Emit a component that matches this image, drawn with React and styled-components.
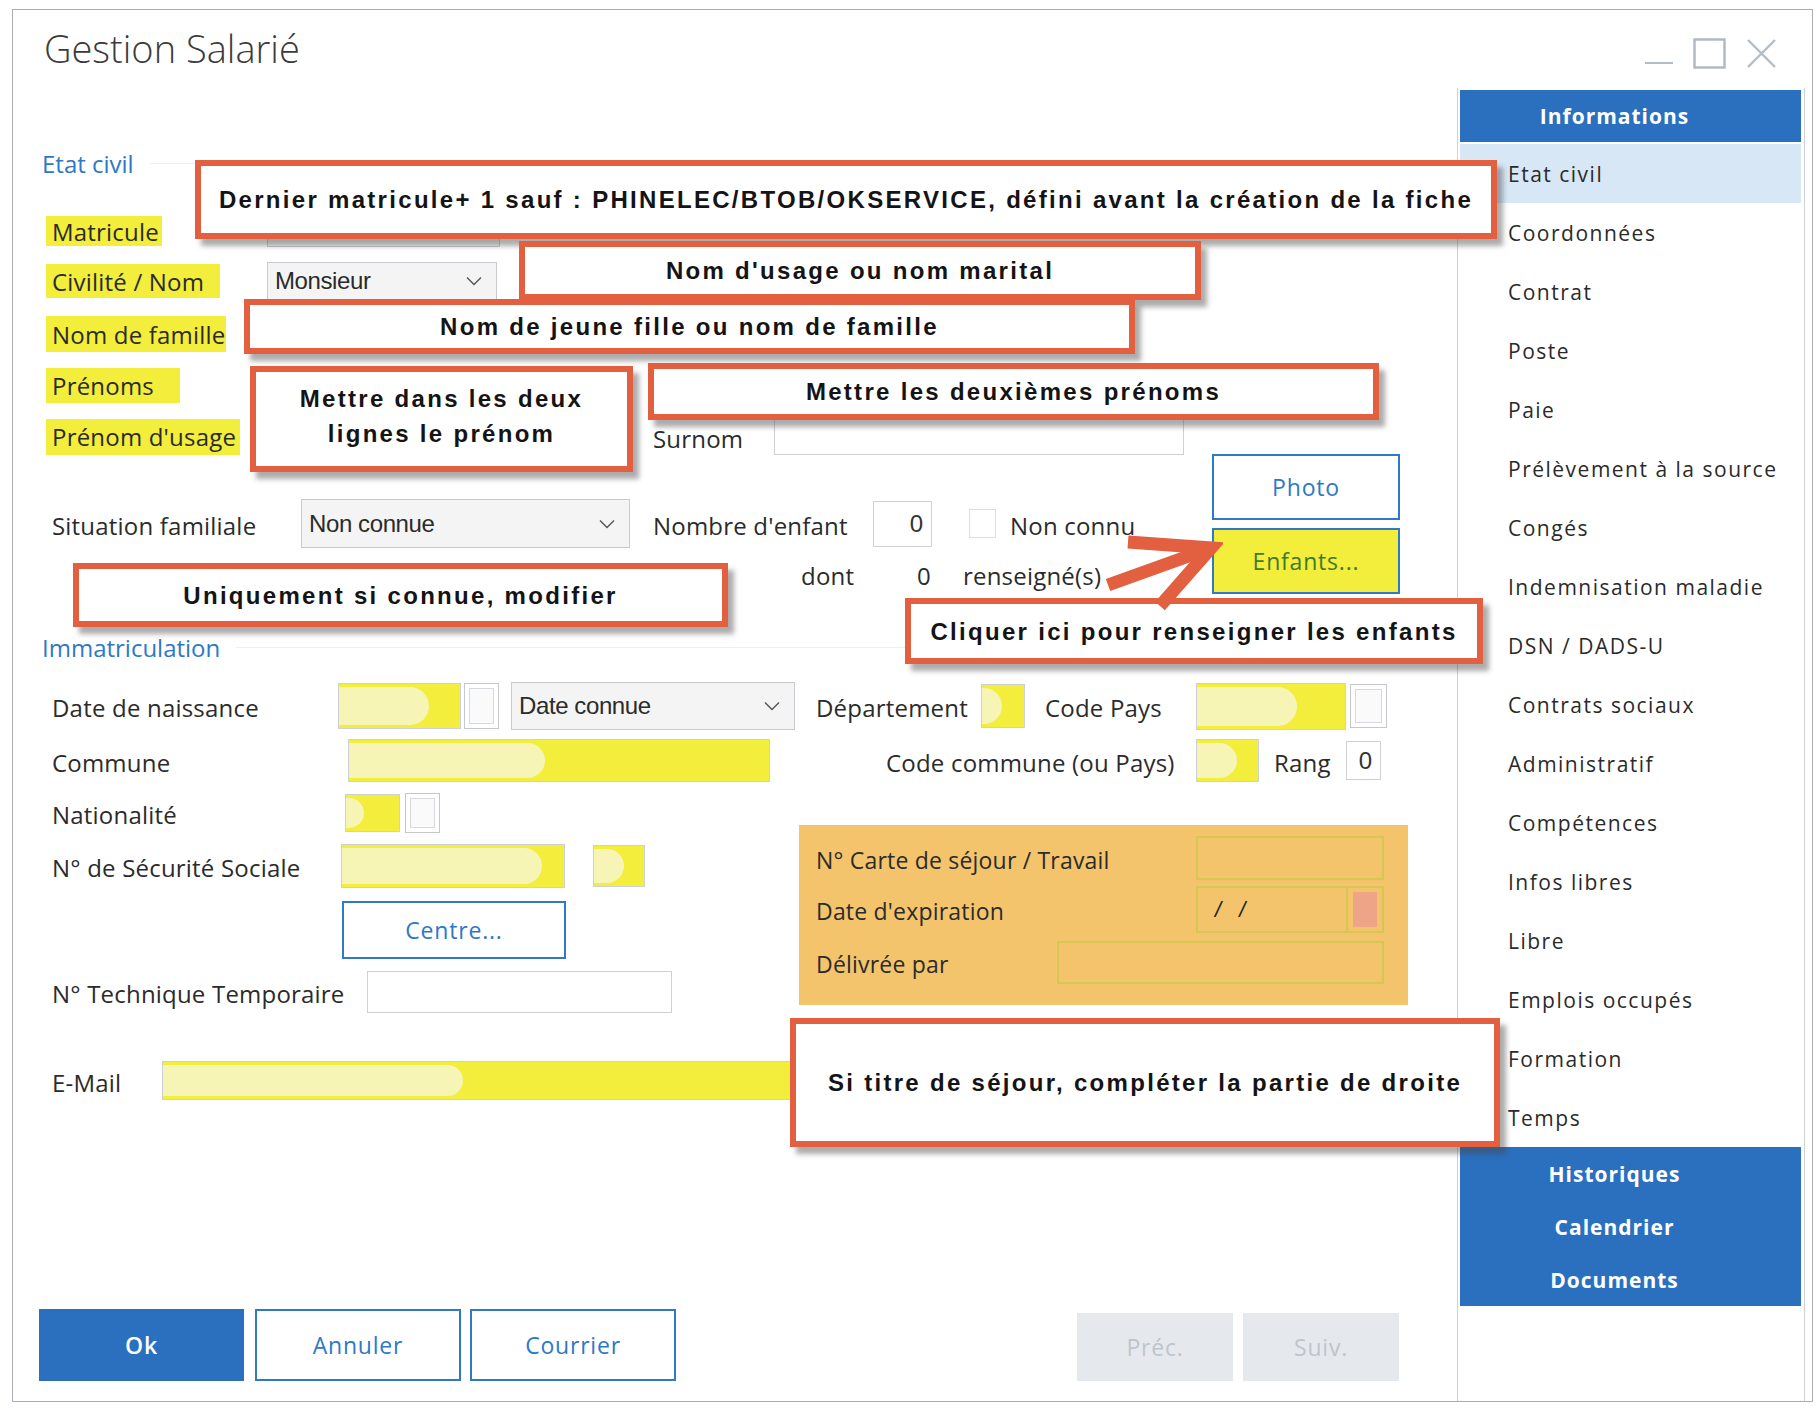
import React from "react"
import styled, { createGlobalStyle, css } from "styled-components"

const BLUE = "#2b6fbf"
const LINK = "#2d79c6"
const YELLOW = "#f3ed3b"
const RED = "#e2603f"

const GlobalStyle = createGlobalStyle`
  html, body {
    margin: 0;
    padding: 0;
    background: #ffffff;
  }
  body {
    font-family: "Open Sans", "Noto Sans", sans-serif;
    color: #2e2e2e;
  }
  * {
    box-sizing: border-box;
  }
`

const Window = styled.div`
  position: relative;
  margin: 9px 0 0 12px;
  width: 1801px;
  height: 1393px;
  border: 1px solid #a9adb3;
  background: #fff;
  display: flex;
  flex-direction: column;
`

const TitleBar = styled.div`
  height: 78px;
  flex: none;
  display: flex;
  align-items: center;
  padding: 0 35px 0 31px;
`

const Title = styled.h1`
  margin: -2px 0 0 0;
  font-size: 38px;
  font-weight: 300;
  color: #3b3b3b;
`

const Controls = styled.div`
  margin-left: auto;
  align-self: flex-start;
  margin-top: 28px;
  display: flex;
  align-items: flex-end;
  gap: 20px;
  height: 31px;
`

const Body = styled.div`
  flex: 1;
  display: flex;
  min-height: 0;
`

const Main = styled.div`
  flex: 1;
  display: flex;
  flex-direction: column;
  padding-left: 39px;
`

const Heading = styled.div`
  flex: none;
  display: flex;
  align-items: center;
  height: 30px;
  margin: ${p => p.$mt}px 0 0 -10px;
  color: ${LINK};
  font-size: 24px;
  &::after {
    content: "";
    flex: 1;
    height: 1px;
    margin: 0 24px 0 16px;
    background: #eceef1;
  }
`

const Row = styled.div`
  flex: none;
  display: flex;
  align-items: center;
  height: ${p => p.$h}px;
  margin-top: ${p => p.$mt || 0}px;
`

const Label = styled.span`
  flex: none;
  width: ${p => p.$w}px;
  margin-left: ${p => p.$ml || 0}px;
  padding-top: 3px;
  font-size: 24px;
  letter-spacing: 0.2px;
  white-space: nowrap;
  color: #2b2b2b;
  ${p =>
    p.$hl &&
    css`
      display: flex;
      align-items: center;
      height: ${p.$hh}px;
      margin-left: -6px;
      padding: 0 6px;
      background: ${YELLOW};
    `}
`

const Field = styled.div`
  position: relative;
  flex: none;
  width: ${p => p.$w}px;
  height: ${p => p.$h || 40}px;
  margin-left: ${p => p.$ml || 0}px;
  border: 1px solid #cdd0d4;
  background: ${p => (p.$yellow ? YELLOW : "#fff")};
  display: flex;
  align-items: center;
  justify-content: flex-end;
  padding: 0 8px;
  font-family: "Liberation Sans", Arial, sans-serif;
  font-size: 24px;
  color: #333;
  overflow: hidden;
  ${p =>
    p.$blot &&
    css`
      &::before {
        content: "";
        position: absolute;
        left: 0;
        top: 3px;
        bottom: 3px;
        width: ${p.$blot}px;
        background: #f7f5b6;
        border-radius: 0 999px 999px 0;
      }
    `}
`

const SpinBox = styled.div`
  flex: none;
  width: ${p => p.$w}px;
  height: ${p => p.$h}px;
  margin-left: ${p => p.$ml || 0}px;
  border: 1px solid #c4c8cd;
  background: #fafafa;
  box-shadow: inset 0 0 0 4px #fff, inset 0 0 0 5px #d6d9dd;
`

const Select = styled.div`
  flex: none;
  width: ${p => p.$w}px;
  height: ${p => p.$h}px;
  margin-left: ${p => p.$ml || 0}px;
  border: 1px solid #c7cacf;
  background: #f4f4f4;
  display: flex;
  align-items: center;
  padding: 0 14px 0 7px;
  font-family: "Liberation Sans", Arial, sans-serif;
  font-size: 24px;
  letter-spacing: -0.4px;
  color: #2b2b2b;
  svg {
    margin-left: auto;
  }
`

const Check = styled.span`
  flex: none;
  width: 27px;
  height: 29px;
  margin-left: ${p => p.$ml}px;
  border: 1px solid #dadde1;
  background: #fff;
`

const Btn = styled.button`
  flex: none;
  width: ${p => p.$w}px;
  height: ${p => p.$h}px;
  margin-left: ${p => p.$ml || 0}px;
  border: 2px solid #3079c6;
  background: #fff;
  color: ${LINK};
  font-family: "Open Sans", sans-serif;
  font-size: 23px;
  letter-spacing: 0.8px;
  padding: 0;
  ${p =>
    p.$variant === "primary" &&
    css`
      background: ${BLUE};
      border-color: ${BLUE};
      color: #fff;
      font-weight: 600;
    `}
  ${p =>
    p.$variant === "yellow" &&
    css`
      background: ${YELLOW};
      color: #3f7a2c;
    `}
  ${p =>
    p.$variant === "muted" &&
    css`
      background: #e5e9ee;
      border-color: #e5e9ee;
      color: #bfc5cc;
    `}
`

const FamilyBlock = styled.div`
  flex: none;
  display: flex;
  height: 140px;
`

const FamilyFields = styled.div`
  flex: none;
  width: 1160px;
  padding-top: 45px;
  display: flex;
  flex-direction: column;
`

const ButtonColumn = styled.div`
  display: flex;
  flex-direction: column;
  gap: 8px;
`

const LowerBlock = styled.div`
  flex: none;
  display: flex;
  align-items: flex-start;
  margin-top: 7px;
`

const LeftColumn = styled.div`
  flex: none;
  width: 747px;
  display: flex;
  flex-direction: column;
`

const PermitBox = styled.div`
  flex: none;
  width: 609px;
  height: 180px;
  margin-top: 35px;
  padding: 11px 24px 0 17px;
  background: #f4c46c;
  display: flex;
  flex-direction: column;
`

const PermitRow = styled.div`
  display: flex;
  align-items: center;
  height: ${p => p.$h}px;
  margin-top: ${p => p.$mt || 0}px;
`

const PermitLabel = styled.span`
  padding-top: 3px;
  font-size: 23px;
  letter-spacing: 0.2px;
  color: #2b2b2b;
  white-space: nowrap;
`

const PermitField = styled.div`
  margin-left: auto;
  width: ${p => p.$w}px;
  height: 100%;
  border: 2px solid #d5c852;
  display: flex;
  align-items: stretch;
`

const DateText = styled.span`
  flex: 1;
  display: flex;
  align-items: center;
  padding-left: 17px;
  font-family: "Liberation Sans", Arial, sans-serif;
  font-style: italic;
  font-size: 22px;
  letter-spacing: 6px;
  color: #222;
  border-right: 2px solid #d5c852;
`

const DatePick = styled.span`
  width: 34px;
  padding: 4px 5px;
  &::before {
    content: "";
    display: block;
    height: 100%;
    background: #eda487;
  }
`

const ButtonBar = styled.div`
  flex: none;
  display: flex;
  align-items: flex-end;
  height: 72px;
  margin: auto 0 20px -13px;
`

const Sidebar = styled.aside`
  flex: none;
  width: 348px;
  margin-right: 7px;
  border-left: 1px solid #cdd1d6;
  border-right: 1px solid #cdd1d6;
  padding: 2px 3px 0 2px;
  display: flex;
  flex-direction: column;
`

const SideHeader = styled.div`
  height: 52px;
  background: ${BLUE};
  color: #fff;
  font-weight: 700;
  font-size: 21px;
  letter-spacing: 1px;
  display: flex;
  align-items: center;
  justify-content: center;
  padding-right: 32px;
`

const SideList = styled.div`
  margin-top: 2px;
  display: flex;
  flex-direction: column;
`

const SideItem = styled.div`
  height: 59px;
  display: flex;
  align-items: center;
  padding-left: 48px;
  font-size: 21px;
  letter-spacing: 1.5px;
  color: #2a2a2a;
  white-space: nowrap;
  background: ${p => (p.$active ? "#d7e7f6" : "transparent")};
`

const SideFooter = styled.div`
  background: ${BLUE};
  display: flex;
  flex-direction: column;
`

const FooterItem = styled.div`
  height: 53px;
  display: flex;
  align-items: center;
  justify-content: center;
  padding-right: 32px;
  color: #fff;
  font-weight: 700;
  font-size: 21px;
  letter-spacing: 1px;
`

const Callout = styled.div`
  position: absolute;
  z-index: 2;
  left: ${p => p.$x}px;
  top: ${p => p.$y}px;
  width: ${p => p.$w}px;
  height: ${p => p.$h}px;
  border: 6px solid ${RED};
  background: #fff;
  box-shadow: 6px 7px 5px rgba(70, 70, 70, 0.45);
  display: flex;
  align-items: center;
  justify-content: center;
  padding-bottom: ${p => p.$pb || 0}px;
  text-align: center;
  font-family: "Liberation Sans", Arial, sans-serif;
  font-weight: 700;
  font-size: 24px;
  letter-spacing: 2.3px;
  line-height: 35px;
  color: #141414;
  white-space: nowrap;
`

const ArrowMark = styled.svg`
  position: absolute;
  z-index: 3;
  left: 1080px;
  top: 520px;
`

const Chevron = () => (
  <svg width="16" height="10" viewBox="0 0 16 10">
    <path d="M1 1.5 L8 8.5 L15 1.5" fill="none" stroke="#555" strokeWidth="1.4" />
  </svg>
)

const WindowControls = () => (
  <Controls>
    <svg width="28" height="4" viewBox="0 0 28 4" style={{ marginBottom: 4 }}>
      <rect x="0" y="1" width="28" height="2" fill="#b3bcc7" />
    </svg>
    <svg width="33" height="31" viewBox="0 0 33 31">
      <rect x="1.5" y="1.5" width="30" height="28" fill="none" stroke="#aeb7c2" strokeWidth="2.4" />
    </svg>
    <svg width="31" height="31" viewBox="0 0 31 31">
      <path d="M2 2 L29 29 M29 2 L2 29" stroke="#b3bcc7" strokeWidth="2.4" />
    </svg>
  </Controls>
)

const sideItems = [
  "Etat civil",
  "Coordonnées",
  "Contrat",
  "Poste",
  "Paie",
  "Prélèvement à la source",
  "Congés",
  "Indemnisation maladie",
  "DSN / DADS-U",
  "Contrats sociaux",
  "Administratif",
  "Compétences",
  "Infos libres",
  "Libre",
  "Emplois occupés",
  "Formation",
  "Temps",
]

const callouts = [
  { x: 182, y: 150, w: 1302, h: 79, text: "Dernier matricule+ 1 sauf : PHINELEC/BTOB/OKSERVICE, défini avant la création de la fiche" },
  { x: 506, y: 231, w: 682, h: 59, text: "Nom d'usage ou nom marital" },
  { x: 231, y: 289, w: 891, h: 55, text: "Nom de jeune fille ou nom de famille" },
  { x: 237, y: 356, w: 383, h: 106, pb: 6, text: ["Mettre dans les deux", "lignes le prénom"] },
  { x: 635, y: 353, w: 731, h: 57, text: "Mettre les deuxièmes prénoms" },
  { x: 60, y: 553, w: 655, h: 64, text: "Uniquement si connue, modifier" },
  { x: 892, y: 588, w: 578, h: 66, text: "Cliquer ici pour renseigner les enfants" },
  { x: 777, y: 1008, w: 710, h: 129, text: "Si titre de séjour, compléter la partie de droite" },
]

const EtatCivil = () => (
  <>
    <Heading $mt={60}>Etat civil</Heading>
    <Row $h={36} $mt={35}>
      <Label $hl $hh={30} $w={116}>Matricule</Label>
      <Select $w={233} $h={32} $ml={105} />
    </Row>
    <Row $h={38} $mt={13}>
      <Label $hl $hh={34} $w={174}>Civilité / Nom</Label>
      <Select $w={230} $h={38} $ml={47}>
        Monsieur
        <Chevron />
      </Select>
    </Row>
    <Row $h={36} $mt={16}>
      <Label $hl $hh={36} $w={180}>Nom de famille</Label>
    </Row>
    <Row $h={36} $mt={15}>
      <Label $hl $hh={35} $w={134}>Prénoms</Label>
    </Row>
    <Row $h={35} $mt={16}>
      <Label $hl $hh={36} $w={194}>Prénom d'usage</Label>
      <Label $w={121} $ml={413}>Surnom</Label>
      <Field $w={410} $h={36} />
    </Row>
    <FamilyBlock>
      <FamilyFields>
        <Row $h={49}>
          <Label $w={249}>Situation familiale</Label>
          <Select $w={329} $h={49}>
            Non connue
            <Chevron />
          </Select>
          <Label $w={220} $ml={23}>Nombre d'enfant</Label>
          <Field $w={59} $h={46}>0</Field>
          <Check $ml={37} />
          <Label $w={140} $ml={14}>Non connu</Label>
        </Row>
        <Row $h={44} $mt={4}>
          <Label $w={116} $ml={749}>dont</Label>
          <Label $w={46}>0</Label>
          <Label $w={140}>renseigné(s)</Label>
        </Row>
      </FamilyFields>
      <ButtonColumn>
        <Btn $w={188} $h={66}>Photo</Btn>
        <Btn $w={188} $h={66} $variant="yellow">Enfants...</Btn>
      </ButtonColumn>
    </FamilyBlock>
  </>
)

const Immatriculation = () => (
  <>
    <Heading $mt={38}>Immatriculation</Heading>
    <Row $h={50} $mt={19}>
      <Label $w={286}>Date de naissance</Label>
      <Field $yellow $blot={90} $w={123} $h={46} />
      <SpinBox $w={35} $h={46} $ml={3} />
      <Select $w={284} $h={48} $ml={12}>
        Date connue
        <Chevron />
      </Select>
      <Label $w={165} $ml={21}>Département</Label>
      <Field $yellow $blot={20} $w={44} $h={44} />
      <Label $w={151} $ml={20}>Code Pays</Label>
      <Field $yellow $blot={100} $w={150} $h={47} />
      <SpinBox $w={37} $h={44} $ml={4} />
    </Row>
    <Row $h={45} $mt={7}>
      <Label $w={296}>Commune</Label>
      <Field $yellow $blot={196} $w={422} $h={43} />
      <Label $w={310} $ml={116}>Code commune (ou Pays)</Label>
      <Field $yellow $blot={40} $w={63} $h={43} />
      <Label $w={72} $ml={15}>Rang</Label>
      <Field $w={35} $h={39} $ml={0}>0</Field>
    </Row>
    <LowerBlock>
      <LeftColumn>
        <Row $h={40} $mt={3}>
          <Label $w={293}>Nationalité</Label>
          <Field $yellow $blot={18} $w={55} $h={38} />
          <SpinBox $w={35} $h={40} $ml={5} />
        </Row>
        <Row $h={44} $mt={11}>
          <Label $w={289}>N° de Sécurité Sociale</Label>
          <Field $yellow $blot={200} $w={224} $h={44} />
          <Field $yellow $blot={30} $w={52} $h={42} $ml={28} />
        </Row>
        <Row $h={58} $mt={13}>
          <Btn $w={224} $h={58} $ml={290}>Centre...</Btn>
        </Row>
        <Row $h={42} $mt={12}>
          <Label $w={315}>N° Technique Temporaire</Label>
          <Field $w={305} $h={42} />
        </Row>
      </LeftColumn>
      <PermitBox>
        <PermitRow $h={44}>
          <PermitLabel>N° Carte de séjour / Travail</PermitLabel>
          <PermitField $w={188} />
        </PermitRow>
        <PermitRow $h={47} $mt={6}>
          <PermitLabel>Date d'expiration</PermitLabel>
          <PermitField $w={188}>
            <DateText>/ /</DateText>
            <DatePick />
          </PermitField>
        </PermitRow>
        <PermitRow $h={43} $mt={8}>
          <PermitLabel>Délivrée par</PermitLabel>
          <PermitField $w={327} />
        </PermitRow>
      </PermitBox>
    </LowerBlock>
    <Row $h={39} $mt={48}>
      <Label $w={110}>E-Mail</Label>
      <Field $yellow $blot={300} $w={640} $h={39} />
    </Row>
  </>
)

export default function App() {
  return (
    <>
      <GlobalStyle />
      <Window>
        <TitleBar>
          <Title>Gestion Salarié</Title>
          <WindowControls />
        </TitleBar>
        <Body>
          <Main>
            <EtatCivil />
            <Immatriculation />
            <ButtonBar>
              <Btn $w={205} $h={72} $variant="primary">Ok</Btn>
              <Btn $w={206} $h={72} $ml={11}>Annuler</Btn>
              <Btn $w={206} $h={72} $ml={9}>Courrier</Btn>
              <Btn $w={156} $h={68} $ml={401} $variant="muted">Préc.</Btn>
              <Btn $w={156} $h={68} $ml={10} $variant="muted">Suiv.</Btn>
            </ButtonBar>
          </Main>
          <Sidebar>
            <SideHeader>Informations</SideHeader>
            <SideList>
              {sideItems.map((item, i) => (
                <SideItem key={item} $active={i === 0}>
                  {item}
                </SideItem>
              ))}
            </SideList>
            <SideFooter>
              <FooterItem>Historiques</FooterItem>
              <FooterItem>Calendrier</FooterItem>
              <FooterItem>Documents</FooterItem>
            </SideFooter>
          </Sidebar>
        </Body>

        {callouts.map(c => (
          <Callout key={c.x + "-" + c.y} $x={c.x} $y={c.y} $w={c.w} $h={c.h} $pb={c.pb}>
            {Array.isArray(c.text) ? (
              <span>
                {c.text[0]}
                <br />
                {c.text[1]}
              </span>
            ) : (
              c.text
            )}
          </Callout>
        ))}

        <ArrowMark width="130" height="90" viewBox="0 0 130 90">
          <path d="M15 55 L118 18" fill="none" stroke={RED} strokeWidth="13" />
          <path d="M35 12 L118 18 L67 76" fill="none" stroke={RED} strokeWidth="13" strokeLinejoin="miter" />
        </ArrowMark>
      </Window>
    </>
  )
}
